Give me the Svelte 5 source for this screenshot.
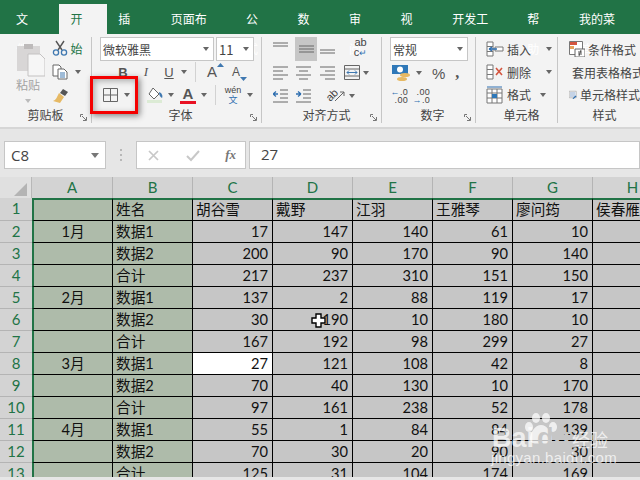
<script>
  const tabs = ['文件','开始','插入','页面布局','公式','数据','审阅','视图','开发工具','帮助','我的菜单'];
  const cols = ['A','B','C','D','E','F','G','H'];
  const rows = [
    ['','姓名','胡谷雪','戴野','江羽','王雅琴','廖问筠','侯春雁'],
    ['1月','数据1',17,147,140,61,10,''],
    ['','数据2',200,90,170,90,140,''],
    ['','合计',217,237,310,151,150,''],
    ['2月','数据1',137,2,88,119,17,''],
    ['','数据2',30,190,10,180,10,''],
    ['','合计',167,192,98,299,27,''],
    ['3月','数据1',27,121,108,42,8,''],
    ['','数据2',70,40,130,10,170,''],
    ['','合计',97,161,238,52,178,''],
    ['4月','数据1',55,1,84,84,139,''],
    ['','数据2',70,30,20,90,30,''],
    ['','合计',125,31,104,174,169,'']
  ];
  const alignTop = [[0,14],[2,12],[4,14]];
  const leftLines = 'M0 1h15M0 5h10M0 9h15M0 13h10';
  const midLines = 'M0 1h15M3 5h9M0 9h15M3 13h9';
  const rightLines = 'M0 1h15M5 5h10M0 9h15M5 13h10';
</script>

{#snippet launcher()}
  <svg class="launch" width="8" height="8" viewBox="0 0 8 8"><path d="M.5 3V.5H3M2 2l4 4M6.5 3v3.5H3" fill="none" stroke="#777"/></svg>
{/snippet}

{#snippet lines(d)}
  <svg width="15" height="14" viewBox="0 0 15 14"><path d={d} stroke="#666" fill="none"/></svg>
{/snippet}

<div class="app">
  <nav class="tabs">
    {#each tabs as t, i}
      <span class="tab" class:on={i === 1}>{t}</span>
    {/each}
  </nav>

  <section class="ribbon">
    <div class="group clip">
      <div class="gbody cliprow">
        <div class="paste">
          <svg width="29" height="35" viewBox="0 0 29 35"><path d="M1 4h23v25H1z" fill="#d8d6d6"/><path d="M8 2h9v5H8z" fill="#bdbaba"/><path d="M12 12h12l5 5v17H12z" fill="#f6f6f6" stroke="#c4c2c2"/></svg>
          <span class="ptxt">粘贴</span>
          <i class="arr pale"></i>
        </div>
        <div class="clipside">
          <svg width="16" height="16" viewBox="0 0 16 16"><path d="M4 1l6 9M12 1l-6 9" stroke="#555" stroke-width="1.4" fill="none"/><circle cx="4" cy="12.5" r="2.6" fill="none" stroke="#3f78b0" stroke-width="1.3"/><circle cx="12" cy="12.5" r="2.6" fill="none" stroke="#3f78b0" stroke-width="1.3"/></svg>
          <span class="iconrow"><svg width="17" height="16" viewBox="0 0 17 16"><path d="M1 1h6l2 2v9H1z" fill="#fff" stroke="#666"/><path d="M6 5h6l3 3v7H6z" fill="#fff" stroke="#666"/><path d="M8 9h5M8 11h5M8 13h5" stroke="#3f78b0"/></svg><i class="arr"></i></span>
          <svg width="17" height="16" viewBox="0 0 17 16"><path d="M11 1l5 3-3 4-5-3z" fill="#555"/><path d="M7 5l5 4-4 6-7-2c3-1 4-4 6-8z" fill="#e6b964"/></svg>
        </div>
      </div>
      <div class="glabel">剪贴板</div>
      {@render launcher()}
    </div>

    <div class="group font">
      <div class="gbody stack">
        <div class="selects">
          <span class="select fname">微软雅黑<i class="arr"></i></span>
          <span class="select fsize">11<i class="arr"></i></span>
        </div>
        <div class="frow r2">
          <b class="bi">B</b><em class="bi it">I</em><span class="bi un">U</span><i class="arr"></i>
          <span class="vsep"></span>
          <span class="grow">A<svg width="7" height="4" viewBox="0 0 7 4"><path d="M0 4l3.500-4 3.500 4z" fill="#3f78b0"/></svg></span>
          <span class="grow small">A<svg width="7" height="4" viewBox="0 0 7 4"><path d="M0 0l3.500 4 3.500-4z" fill="#3f78b0"/></svg></span>
        </div>
        <div class="frow r3">
          <svg class="bord" width="15" height="14" viewBox="0 0 15 14"><path d="M.5.500h14v13H.5zM7.500.500v13M.5 7h14" fill="none" stroke="#666"/></svg>
          <i class="arr a1"></i>
          <svg class="fill" width="17" height="16" viewBox="0 0 17 16"><path d="M6 1l6 6-5 5-5-5z" fill="#fff" stroke="#666"/><path d="M12 5c3 1 4 4 3 6-2-1-3-3-3-6z" fill="#3f78b0"/><path d="M0 13h15v3H0z" fill="#dcebd5"/></svg>
          <i class="arr"></i>
          <span class="fcolor">A</span>
          <i class="arr"></i>
          <span class="vsep"></span>
          <span class="wen"><span>wén</span><span class="wenz">文</span></span>
          <i class="arr"></i>
        </div>
      </div>
      <div class="glabel">字体</div>
      {@render launcher()}
    </div>

    <div class="group align">
      <div class="gbody agrid">
        <span class="acell">{@render lines('M0 1h15M0 4h15')}</span>
        <span class="acell sel">{@render lines('M0 4h15M0 7h15M0 10h15')}</span>
        <span class="acell">{@render lines('M0 8h15M0 11h15')}</span>
        <span class="acell wrap"><span>ab</span><span>c<small>↵</small></span></span>
        <span class="acell">{@render lines(leftLines)}</span>
        <span class="acell">{@render lines(midLines)}</span>
        <span class="acell">{@render lines(rightLines)}</span>
        <span class="acell merge"><svg width="16" height="15" viewBox="0 0 16 15"><path d="M.5.500h15v14H.5zM.5 4h15M.5 11h15M5 4v0" fill="none" stroke="#666"/><path d="M3 7.500h10M3 7.500l2-2M3 7.500l2 2M13 7.500l-2-2M13 7.500l-2 2" stroke="#3f78b0" fill="none"/></svg><i class="arr"></i></span>
        <span class="acell"><svg width="15" height="14" viewBox="0 0 15 14"><path d="M7 1h8M7 5h8M7 9h8M0 13h15" stroke="#666"/><path d="M5 5H0M0 5l3-2.500M0 5l3 2.500" stroke="#2f6fb0" stroke-width="1.300" fill="none"/></svg></span>
        <span class="acell"><svg width="15" height="14" viewBox="0 0 15 14"><path d="M7 1h8M7 5h8M7 9h8M0 13h15" stroke="#666"/><path d="M0 5h5M5 5L2 2.500M5 5L2 7.500" stroke="#2f6fb0" stroke-width="1.300" fill="none"/></svg></span>
        <span class="acell orient"><span class="abrot">ab</span><svg width="10" height="10" viewBox="0 0 10 10"><path d="M0 10L9 1M5 1h4v4" stroke="#666" fill="none"/></svg><i class="arr"></i></span>
      </div>
      <div class="glabel">对齐方式</div>
      {@render launcher()}
    </div>

    <div class="group number">
      <div class="gbody stack">
        <span class="select nfmt">常规<i class="arr"></i></span>
        <div class="frow nrow">
          <svg width="19" height="19" viewBox="0 0 19 19"><path d="M0 1h16v9H0z" fill="#2f78b8"/><circle cx="8" cy="5.500" r="3" fill="#fff"/><ellipse cx="13" cy="11" rx="5" ry="2" fill="#e6b964"/><ellipse cx="10" cy="15" rx="5" ry="2" fill="#e6b964"/></svg>
          <i class="arr"></i>
          <span class="pct">%</span>
          <span class="comma">,</span>
        </div>
        <div class="frow nrow3">
          <span class="dec"><span class="l1"><em class="arrow">←</em>.0</span><span>.00</span></span>
          <span class="dec"><span>.00</span><span class="l1"><em class="arrow">→</em>.0</span></span>
        </div>
      </div>
      <div class="glabel">数字</div>
      {@render launcher()}
    </div>

    <div class="group cells">
      <div class="gbody cellrows">
        <div class="crow"><svg width="18" height="16" viewBox="0 0 18 16"><path d="M1 1h6v14H1zM1 5.500h6M1 10.500h6M9 6h8v4H9z" fill="#fff" stroke="#777"/><path d="M11 8H3M3 8l3-2M3 8l3 2" stroke="#2f6fb0" stroke-width="1.300" fill="none"/></svg><span>插入</span><i class="arr"></i></div>
        <div class="crow"><svg width="18" height="16" viewBox="0 0 18 16"><path d="M1 1h6v14H1zM1 5.500h6M1 10.500h6" fill="#fff" stroke="#777"/><path d="M10 4l6 7M16 4l-6 7" stroke="#d4553f" stroke-width="1.600"/></svg><span>删除</span><i class="arr"></i></div>
        <div class="crow"><svg width="18" height="18" viewBox="0 0 18 18"><path d="M1 3h15v14H1zM1 7h15M1 12h15M6 3v14M11 3v14" fill="#fff" stroke="#777"/><path d="M6 8h5v4H6z" fill="#2f78b8"/><path d="M1 1h15" stroke="#2f6fb0"/></svg><span>格式</span><i class="arr"></i></div>
      </div>
      <div class="glabel">单元格</div>
    </div>

    <div class="group styles">
      <div class="gbody cellrows">
        <div class="crow"><svg width="16" height="16" viewBox="0 0 16 16"><path d="M.5.500h13v13H.5z" fill="#fff" stroke="#777"/><path d="M1 1h7v3H1z" fill="#d4553f"/><path d="M1 5h4v3H1z" fill="#e6a35c"/><path d="M6 8h10v8H6z" fill="#fff" stroke="#666"/><path d="M9 11h4M9 13h4M12 9l-2 6" stroke="#555" fill="none"/></svg><span>条件格式</span></div>
        <div class="crow"><svg width="16" height="16" viewBox="0 0 16 16"><path d="M.5.500h14v13H.5zM.5 5h14M.5 9h14M5 .5v13M10 .5v13" fill="#fff" stroke="#888"/><path d="M1 5h9v8H1z" fill="#c5d3e6"/><path d="M7 15l6-6 2 2-6 5z" fill="#2f6fb0"/></svg><span>套用表格格式</span></div>
        <div class="crow"><svg width="16" height="16" viewBox="0 0 16 16"><path d="M.5.500h14v13H.5z" fill="#fff" stroke="#888"/><path d="M2 2h11v10H2z" fill="#c5d3e6"/><path d="M7 15l6-6 2 2-6 5z" fill="#2f6fb0"/></svg><span>单元格样式</span></div>
      </div>
      <div class="glabel">样式</div>
    </div>
  </section>

  <section class="fbar">
    <div class="namebox">C8<i class="arr big"></i></div>
    <span class="dots"></span>
    <div class="fxbox">
      <svg width="13" height="13" viewBox="0 0 13 13"><path d="M2 2l9 9M11 2l-9 9" stroke="#c8c8c8" stroke-width="1.700"/></svg>
      <svg width="14" height="13" viewBox="0 0 14 13"><path d="M1 7l4 4 8-9" stroke="#c8c8c8" stroke-width="2" fill="none"/></svg>
      <span class="fx">fx</span>
    </div>
    <div class="fval">27</div>
  </section>

  <section class="sheet">
    <div class="corner"><svg width="14" height="13" viewBox="0 0 14 13"><path d="M0 13L13 0v13z" fill="#b4b4b4"/></svg></div>
    {#each cols as c, i}<div class="chead" class:first={i === 0}>{c}</div>{/each}
    {#each rows as row, r}
      <div class="rhead">{r + 1}</div>
      {#each row as v, c}
        <div
          class="cell"
          class:top={r === 0}
          class:left={c === 0}
          class:tint={c < 2}
          class:num={typeof v === 'number'}
          class:ctr={c === 0}
          class:active={r === 7 && c === 2}
          class:noline={c === 0 && r > 0 && rows[r + 1] && rows[r + 1][0] === '' && false}
        >{v}</div>
      {/each}
    {/each}
  </section>

  <div class="redbox"></div>

  <svg class="cursor" width="15" height="15" viewBox="0 0 15 15"><path d="M5 1h5v4h4v5h-4v4H5v-4H1V5h4z" fill="#fff" stroke="#000" stroke-width="1.400"/></svg>

  <div class="mark">
    <svg class="paw" width="40" height="34" viewBox="0 0 40 34"><g fill="#fff" opacity=".72"><ellipse cx="8" cy="15" rx="4" ry="5"/><ellipse cx="15" cy="6" rx="4" ry="5"/><ellipse cx="25" cy="6" rx="4" ry="5"/><ellipse cx="32" cy="15" rx="4" ry="5"/><path d="M20 13c6 0 11 8 11 14 0 5-6 5-11 4-5 1-11 1-11-4 0-6 5-14 11-14z"/></g></svg>
    <div class="mrow"><span class="bai">Bai</span><span class="du">du</span><span class="jy">经验</span></div>
    <div class="url">jingyan.baidu.com</div>
  </div>
</div>

<style>
  :global(body) { margin: 0; }
  :global(html), :global(body) { overflow: hidden; }
  .app {
    width: 640px; height: 480px; overflow: hidden; position: relative;
    background: #e6e6e6;
    font-family: "Noto Sans CJK SC", "Liberation Sans", sans-serif;
    color: #444; font-size: 12px;
  }
  .tabs { height: 34px; background: #217346; display: flex; align-items: flex-end; padding-left: 2px; box-sizing: border-box; }
  .tab { color: #fff; font-size: 12px; line-height: 30px; height: 30px; padding: 0 14px; }
  .tab:first-child { padding: 0 14px; }
  .tab.on { background: #f3f3f3; color: #217346; padding: 0 13px 0 12px; margin-left: 5px; }
  .tab:nth-child(3) { padding: 0 14px 0 11px; }
  .tab:nth-child(4) { padding: 0 14px 0 15px; }
  .tab:nth-child(n+5) { padding: 0 14px 0 14px; }

  .ribbon { height: 93px; background: #f3f3f3; border-bottom: 2px solid #d6d6d6; display: flex; box-sizing: content-box; }
  .group { position: relative; box-sizing: border-box; border-right: 1px solid #c6c6c6; margin: 3px 0 4px; display: flex; flex-direction: column; flex: none; }
  .gbody { height: 69px; box-sizing: border-box; }
  .glabel { text-align: center; line-height: 17px; color: #444; font-size: 12px; }
  .launch { position: absolute; right: 3px; bottom: 1px; }
  .clip { width: 92px; }
  .font { width: 120px; width: 170px; padding-left: 8px; }
  .align { width: 120px; padding-left: 10px; }
  .number { width: 94px; padding-left: 8px; }
  .cells { width: 82px; padding-left: 10px; }
  .styles { width: 82px; padding-left: 11px; border-right: 0; white-space: nowrap; }
  .arr { display: inline-block; width: 0; height: 0; border: 3.5px solid transparent; border-top: 4px solid #666; border-bottom: 0; flex: none; }
  .arr.pale { border-top-color: #bbb; }

  .cliprow { display: flex; padding-left: 16px; }
  .paste { width: 36px; display: flex; flex-direction: column; align-items: flex-start; padding-top: 5px; }
  .ptxt { color: #a3a3a3; line-height: 16px; margin-top: 0; }
  .paste .arr { margin: 6px 0 0 9px; }
  .clipside { display: flex; flex-direction: column; gap: 8px; padding-top: 3px; }
  .iconrow { display: flex; align-items: center; gap: 6px; height: 16px; }

  .stack { display: flex; flex-direction: column; }
  .selects { display: flex; gap: 2px; height: 24px; }
  .select { display: flex; align-items: center; justify-content: space-between; box-sizing: border-box; background: #fff; border: 1px solid #c6c6c6; height: 24px; padding: 0 4px 0 2px; }
  .fname { width: 114px; color: #444; font-size: 12px; }
  .fsize { width: 38px; font-size: 13px; }
  .frow { display: flex; align-items: center; }
  .r2 { height: 24px; padding-left: 13px; }
  .bi { width: 20px; font-family: "Liberation Sans", sans-serif; font-size: 13px; color: #555; text-align: center; margin-right: 3px; }
  .it { font-family: "Liberation Serif", serif; }
  .un { text-decoration: underline; margin-right: 2px; }
  .vsep { width: 1px; height: 20px; background: #d2d2d2; margin: 0 8px 0 8px; flex: none; }
  .grow { display: flex; font-family: "Liberation Sans", sans-serif; font-size: 15px; color: #555; width: 22px; margin-left: 3px; line-height: 18px; }
  .grow.small { font-size: 12px; align-items: flex-end; }
  .r3 { height: 25px; padding-left: 3px; }
  .a1 { margin: 0 17px 0 6px; }
  .fill { margin-right: 4px; }
  .fcolor { font-family: "Liberation Sans", sans-serif; font-size: 15px; line-height: 15px; width: 16px; text-align: center; color: #555; border-bottom: 3px solid #e81123; margin: 0 5px 0 6px; font-weight: 700; }
  .wen { display: flex; flex-direction: column; align-items: center; font-family: "Liberation Sans", sans-serif; font-size: 9px; line-height: 9px; width: 18px; margin-right: 5px; }
  .wenz { color: #2f6fb0; font-size: 9px; font-family: "Noto Sans CJK SC", sans-serif; }

  .agrid { display: grid; grid-template-columns: 23px 24px 24px 34px; grid-template-rows: 24px 23px 23px; }
  .acell { display: flex; align-items: center; justify-content: flex-start; padding-left: 1px; gap: 3px; }
  .sel { background: #c6c6c6; justify-content: center; padding: 0; width: 22px; }
  .wrap { flex-direction: column; align-items: center; font-family: "Liberation Sans", sans-serif; font-size: 11px; line-height: 10px; gap: 0; }
  .wrap small { color: #2f6fb0; font-size: 9px; }
  .orient { grid-column: 3 / 5; padding-left: 7px; gap: 0; }
  .abrot { display: inline-block; transform: rotate(-45deg); font-family: "Liberation Sans", sans-serif; font-size: 11px; width: 9px; }
  .orient .arr { margin-left: 4px; }

  .nfmt { width: 78px; font-size: 12px; }
  .nrow { height: 24px; padding-left: 2px; }
  .nrow .arr { margin-left: 5px; }
  .pct { font-family: "Liberation Sans", sans-serif; font-size: 15px; margin-left: 10px; color: #555; }
  .comma { font-family: "Liberation Serif", serif; font-weight: 700; font-size: 16px; margin-left: 10px; line-height: 8px; color: #555; }
  .nrow3 { height: 21px; gap: 7px; padding-left: 3px; }
  .dec { display: flex; flex-direction: column; align-items: flex-end; font-family: "Liberation Sans", sans-serif; font-size: 9px; line-height: 8px; width: 15px; letter-spacing: .3px; }
  .l1 { white-space: nowrap; }
  .arrow { color: #2f6fb0; font-style: normal; }

  .cellrows { display: flex; flex-direction: column; padding-top: 1px; }
  .crow { display: flex; align-items: center; height: 23px; gap: 3px; }
  .crow span { flex: none; }
  .cells .crow .arr { margin-left: 12px; }
  .cells .crow:last-child .arr { margin-left: 6px; }

  .fbar { height: 48px; background: #e6e6e6; display: flex; align-items: flex-start; padding-top: 12px; box-sizing: border-box; }
  .namebox { width: 102px; height: 28px; margin-left: 4px; box-sizing: border-box; background: #fff; border: 1px solid #c6c6c6; display: flex; align-items: center; justify-content: space-between; padding: 0 6px; font-family: "Open Sans", sans-serif; font-size: 15px; color: #444; flex: none; }
  .arr.big { border-width: 4px; border-top-width: 5px; border-top-color: #777; }
  .dots { width: 2px; height: 12px; margin: 8px 14px 0 14px; background: repeating-linear-gradient(#b8b8b8 0 2px, transparent 2px 5px); flex: none; }
  .fxbox { width: 110px; height: 28px; box-sizing: border-box; background: #fff; border: 1px solid #c6c6c6; display: flex; align-items: center; padding: 0 9px 0 10px; justify-content: space-between; flex: none; }
  .fx { font-family: "Liberation Serif", serif; font-style: italic; font-size: 13px; font-weight: 700; color: #777; }
  .fval { flex: 1; margin-left: 3px; height: 28px; box-sizing: border-box; background: #fff; border: 1px solid #c6c6c6; padding-left: 11px; line-height: 25px; font-size: 15px; font-family: "Open Sans", sans-serif; color: #444; }

  .sheet { display: grid; grid-template-columns: 32px 81px repeat(7, 80px); grid-template-rows: 21px 23px repeat(12, 22px); height: 300px; overflow: hidden; margin-top: 0; }
  .corner { background: #e0e0e0; border-right: 1px solid #b8b8b8; display: flex; align-items: flex-end; justify-content: flex-end; box-sizing: border-box; padding: 0 3px 2px 0; }
  .chead { background: #d3d3d3; color: #217346; text-align: center; font-family: "Lato", sans-serif; font-size: 15px; line-height: 20px; border-right: 1px solid #b4b4b4; box-sizing: border-box; }
  .rhead { background: #d3d3d3; color: #217346; text-align: center; font-family: "Lato", sans-serif; font-size: 15px; line-height: 21px; border-bottom: 1px solid #b4b4b4; box-sizing: border-box; }
  .cell { background: #c6c6c6; border-right: 1px solid #000; border-bottom: 1px solid #000; box-sizing: border-box; padding: 0 3px; font-size: 14.67px; line-height: 21px; color: #111; font-family: "Lato", "Noto Sans CJK SC", sans-serif; white-space: nowrap; overflow: hidden; }
  .top { border-top: 2px solid #217346; line-height: 20px; }
  .left { border-left: 2px solid #217346; }
  .tint { background: #aebbaa; }
  .num { text-align: right; padding-right: 4px; }
  .ctr { text-align: center; }
  .active { background: #fff; }

  .redbox { position: absolute; left: 90px; top: 76px; width: 48px; height: 38px; box-sizing: border-box; border: 3px solid #f40000; box-shadow: 2px 2px 6px rgba(0,0,0,.45), inset 2px 2px 6px rgba(0,0,0,.3); }
  .cursor { position: absolute; left: 311px; top: 313px; }
  .mark { position: absolute; left: 490px; top: 412px; width: 125px; color: rgba(255,255,255,.72); font-family: "Liberation Sans", sans-serif; }
  .paw { position: absolute; left: 31px; top: 0; }
  .mrow { position: absolute; top: 10px; left: 2px; display: flex; align-items: baseline; white-space: nowrap; }
  .bai { font-size: 27px; font-weight: 700; }
  .du { font-size: 27px; font-weight: 700; color: #c6c6c6; margin-left: 3px; line-height: 33px; }
  .jy { font-size: 18px; margin-left: 2px; font-family: "Noto Sans CJK SC", sans-serif; }
  .url { position: absolute; top: 37px; left: 1px; font-size: 15px; letter-spacing: .3px; white-space: nowrap; }
</style>
